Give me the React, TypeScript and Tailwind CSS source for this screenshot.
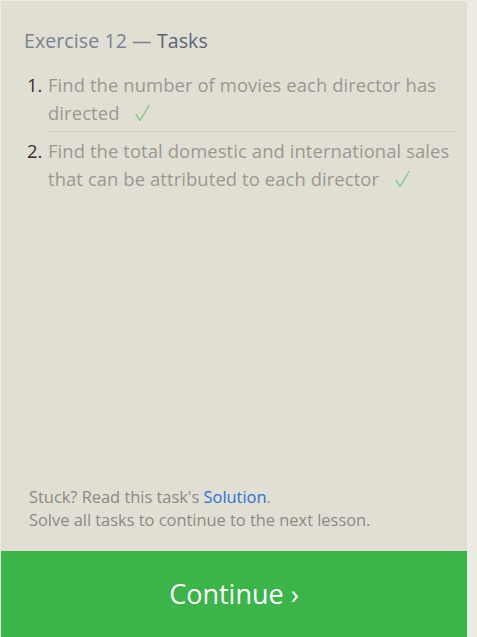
import React from 'react';

const tasks = [
  { text: 'Find the number of movies each director has directed' },
  { text: 'Find the total domestic and international sales that can be attributed to each director' },
];

function Check() {
  return (
    <svg className="ml-[16px] inline-block align-[-2px]" width="15" height="18" viewBox="0 0 15 18" fill="none">
      <path d="M1 10.5 L5 16.5 L14 1.5" stroke="#7dca8b" strokeWidth="1.4" strokeLinecap="round" strokeLinejoin="round" />
    </svg>
  );
}

export default function App() {
  return (
    <div className="h-[637px] w-[477px] bg-[#eeebe4] pt-[1px] pl-[1px] overflow-hidden" style={{ fontFamily: '"Open Sans", "Noto Sans", sans-serif' }}>
      <div className="flex h-full w-[466px] flex-col bg-[#e1dfd4]">
        <div className="flex-1 px-[23px] pt-[27px]">
          <h2 className="text-[19.5px] leading-[26px] tracking-[0.1px] text-[#7a8190]">
            Exercise 12 — <span className="text-[#5c6474]">Tasks</span>
          </h2>
          <ol className="mt-[17px]">
            {tasks.map((t, i) => (
              <li key={i} className="flex">
                <span className="w-[24px] shrink-0 pl-[3px] text-[18.4px] leading-[28px] text-[#3a2e28]">{i + 1}.</span>
                <div className={`flex-1 mr-[-13px] ${i === 0 ? 'border-b border-[#d4d1c6] pb-[4px] mb-[5px]' : ''}`}>
                  <span className="text-[18.4px] leading-[28px] tracking-[0.1px] text-[#9a9890]">{t.text}</span>
                  <Check />
                </div>
              </li>
            ))}
          </ol>
        </div>
        <div className="px-[28px] pb-[19px] text-[16.4px] leading-[24px] text-[#8c8a84]">
          <p className="mb-[-1px]">
            Stuck? Read this task's <a className="text-[#2a6fd8]">Solution</a>.
          </p>
          <p>Solve all tasks to continue to the next lesson.</p>
        </div>
        <button className="flex h-[86px] w-full items-center justify-center bg-[#3bb54a] text-[27px] text-white">
          Continue ›
        </button>
      </div>
    </div>
  );
}
